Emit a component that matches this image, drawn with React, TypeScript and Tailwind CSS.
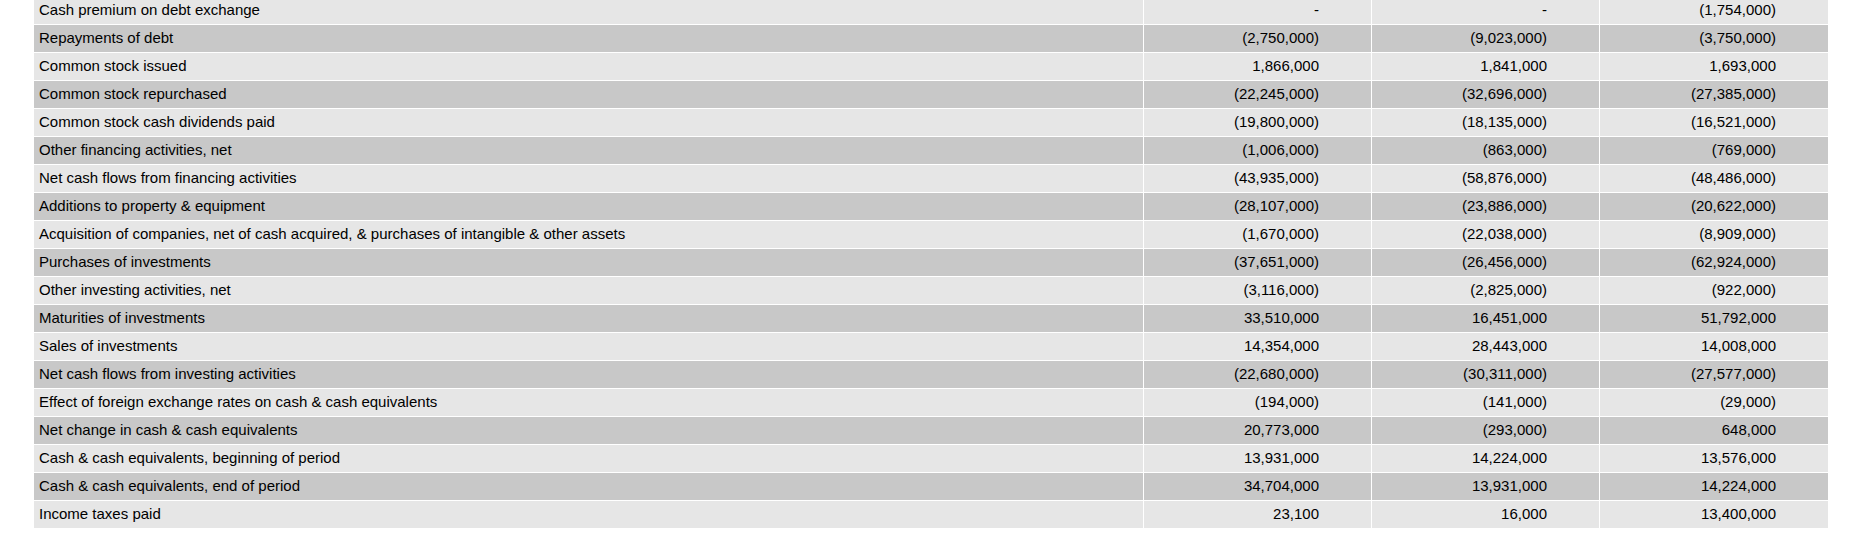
import React from 'react';

type Row = { label: string; values: [string, string, string] };

const rows: Row[] = [
  { label: 'Cash premium on debt exchange', values: ['-', '-', '(1,754,000)'] },
  { label: 'Repayments of debt', values: ['(2,750,000)', '(9,023,000)', '(3,750,000)'] },
  { label: 'Common stock issued', values: ['1,866,000', '1,841,000', '1,693,000'] },
  { label: 'Common stock repurchased', values: ['(22,245,000)', '(32,696,000)', '(27,385,000)'] },
  { label: 'Common stock cash dividends paid', values: ['(19,800,000)', '(18,135,000)', '(16,521,000)'] },
  { label: 'Other financing activities, net', values: ['(1,006,000)', '(863,000)', '(769,000)'] },
  { label: 'Net cash flows from financing activities', values: ['(43,935,000)', '(58,876,000)', '(48,486,000)'] },
  { label: 'Additions to property & equipment', values: ['(28,107,000)', '(23,886,000)', '(20,622,000)'] },
  {
    label: 'Acquisition of companies, net of cash acquired, & purchases of intangible & other assets',
    values: ['(1,670,000)', '(22,038,000)', '(8,909,000)'],
  },
  { label: 'Purchases of investments', values: ['(37,651,000)', '(26,456,000)', '(62,924,000)'] },
  { label: 'Other investing activities, net', values: ['(3,116,000)', '(2,825,000)', '(922,000)'] },
  { label: 'Maturities of investments', values: ['33,510,000', '16,451,000', '51,792,000'] },
  { label: 'Sales of investments', values: ['14,354,000', '28,443,000', '14,008,000'] },
  { label: 'Net cash flows from investing activities', values: ['(22,680,000)', '(30,311,000)', '(27,577,000)'] },
  { label: 'Effect of foreign exchange rates on cash & cash equivalents', values: ['(194,000)', '(141,000)', '(29,000)'] },
  { label: 'Net change in cash & cash equivalents', values: ['20,773,000', '(293,000)', '648,000'] },
  { label: 'Cash & cash equivalents, beginning of period', values: ['13,931,000', '14,224,000', '13,576,000'] },
  { label: 'Cash & cash equivalents, end of period', values: ['34,704,000', '13,931,000', '14,224,000'] },
  { label: 'Income taxes paid', values: ['23,100', '16,000', '13,400,000'] },
];

const App: React.FC = () => {
  return (
    <div className="min-h-screen bg-white pl-[34px] text-[15px] text-black" style={{ fontFamily: '"Liberation Sans", Arial, sans-serif' }}>
      {/* page is scrolled a few px, first row sits partly above the fold */}
      <div className="-mt-[3px] grid w-[1794px] grid-cols-[1109px_227px_227px_228px] gap-px">
        {rows.map((r, i) => {
          const bg = i % 2 === 0 ? 'bg-[#e6e6e6]' : 'bg-[#c8c8c8]';
          return (
            <React.Fragment key={r.label}>
              <div className={`${bg} flex h-[27px] items-center pl-[5px] whitespace-nowrap`}>{r.label}</div>
              {r.values.map((v, j) => (
                <div key={j} className={`${bg} flex h-[27px] items-center justify-end pr-[52px]`}>
                  {v}
                </div>
              ))}
            </React.Fragment>
          );
        })}
      </div>
    </div>
  );
};

export default App;
